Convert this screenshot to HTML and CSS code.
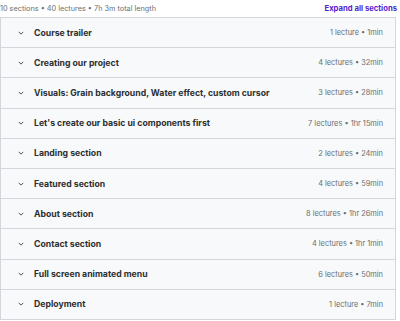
FILE: index.html
```html
<!DOCTYPE html>
<html>
<head>
    <title>Course content</title>
    <link rel="stylesheet" href="styles.css">
</head>
<body>
    <div class="content">
        <div class="summary">
            <span>10 sections • 40 lectures • 7h 3m total length</span>
            <a href="#" class="expand">Expand all sections</a>
        </div>

        <div class="sections">
            <div class="section">
                <svg class="chev" viewBox="0 0 8 5"><path d="M1 1l3 3 3-3" /></svg>
                <span class="title">Course trailer</span>
                <span class="meta">1 lecture • 1min</span>
            </div>
            <div class="section">
                <svg class="chev" viewBox="0 0 8 5"><path d="M1 1l3 3 3-3" /></svg>
                <span class="title">Creating our project</span>
                <span class="meta">4 lectures • 32min</span>
            </div>
            <div class="section">
                <svg class="chev" viewBox="0 0 8 5"><path d="M1 1l3 3 3-3" /></svg>
                <span class="title">Visuals: Grain background, Water effect, custom cursor</span>
                <span class="meta">3 lectures • 28min</span>
            </div>
            <div class="section">
                <svg class="chev" viewBox="0 0 8 5"><path d="M1 1l3 3 3-3" /></svg>
                <span class="title">Let's create our basic ui components first</span>
                <span class="meta">7 lectures • 1hr 15min</span>
            </div>
            <div class="section">
                <svg class="chev" viewBox="0 0 8 5"><path d="M1 1l3 3 3-3" /></svg>
                <span class="title">Landing section</span>
                <span class="meta">2 lectures • 24min</span>
            </div>
            <div class="section">
                <svg class="chev" viewBox="0 0 8 5"><path d="M1 1l3 3 3-3" /></svg>
                <span class="title">Featured section</span>
                <span class="meta">4 lectures • 59min</span>
            </div>
            <div class="section">
                <svg class="chev" viewBox="0 0 8 5"><path d="M1 1l3 3 3-3" /></svg>
                <span class="title">About section</span>
                <span class="meta">8 lectures • 1hr 26min</span>
            </div>
            <div class="section">
                <svg class="chev" viewBox="0 0 8 5"><path d="M1 1l3 3 3-3" /></svg>
                <span class="title">Contact section</span>
                <span class="meta">4 lectures • 1hr 1min</span>
            </div>
            <div class="section">
                <svg class="chev" viewBox="0 0 8 5"><path d="M1 1l3 3 3-3" /></svg>
                <span class="title">Full screen animated menu</span>
                <span class="meta">6 lectures • 50min</span>
            </div>
            <div class="section">
                <svg class="chev" viewBox="0 0 8 5"><path d="M1 1l3 3 3-3" /></svg>
                <span class="title">Deployment</span>
                <span class="meta">1 lecture • 7min</span>
            </div>
        </div>
    </div>
</body>
</html>
```

FILE: styles.css
```css
body {
    margin: 0;
    background-color: #ffffff;
    font-family: Inter, "Liberation Sans", sans-serif;
    color: #2d2f31;
}

.content {
    width: 397px;
}

.summary {
    display: flex;
    justify-content: space-between;
    align-items: center;
    height: 17px;
    font-size: 7.3px;
    color: #6a6f73;
}

.expand {
    color: #5624d0;
    font-weight: bold;
    text-decoration: none;
    font-size: 7.7px;
}

.sections {
    border: 1px solid #d1d7dc;
    border-top: none;
    width: 394px;
}

.section {
    display: flex;
    align-items: center;
    height: 29.2px;
    border-top: 1px solid #d1d7dc;
    background-color: #f7f9fa;
    padding: 0 12px 0 17px;
}

.chev {
    width: 6px;
    height: 4px;
    fill: none;
    stroke: #3e4143;
    stroke-width: 1.2;
    margin-right: 10px;
}

.title {
    flex: 1;
    font-size: 8.7px;
    font-weight: bold;
}

.meta {
    font-size: 7.4px;
    color: #6a6f73;
}
```
